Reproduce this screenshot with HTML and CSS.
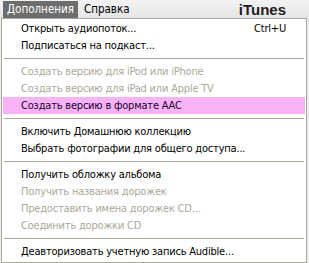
FILE: index.html
```html
<!DOCTYPE html>
<html lang="ru">
<head>
    <meta charset="UTF-8">
    <title>iTunes — Дополнения</title>
    <link rel="stylesheet" href="styles.css">
</head>
<body>
    <div class="menubar">
        <span class="menubar-item active">Дополнения</span>
        <span class="menubar-item">Справка</span>
        <span class="brand">iTunes</span>
    </div>
    <div class="menu">
        <div class="item"><span>Открыть аудиопоток...</span><span class="shortcut">Ctrl+U</span></div>
        <div class="item">Подписаться на подкаст...</div>
        <div class="sep"></div>
        <div class="item disabled">Создать версию для iPod или iPhone</div>
        <div class="item disabled">Создать версию для iPad или Apple TV</div>
        <div class="item hover">Создать версию в формате AAC</div>
        <div class="sep"></div>
        <div class="item">Включить Домашнюю коллекцию</div>
        <div class="item">Выбрать фотографии для общего доступа...</div>
        <div class="sep"></div>
        <div class="item">Получить обложку альбома</div>
        <div class="item disabled">Получить названия дорожек</div>
        <div class="item disabled">Предоставить имена дорожек CD...</div>
        <div class="item disabled">Соединить дорожки CD</div>
        <div class="sep"></div>
        <div class="item">Деавторизовать учетную запись Audible...</div>
    </div>
</body>
</html>
```

FILE: styles.css
```css
body {
    margin: 0;
    width: 309px;
    height: 263px;
    overflow: hidden;
    background: #ebebeb;
    font-family: "DejaVu Sans Condensed", "DejaVu Sans", sans-serif;
    font-size: 11px;
    color: #000;
}

.menubar {
    height: 18px;
    display: flex;
    align-items: center;
    padding: 0 0 0 3px;
    background: linear-gradient(#f2f2f2, #e6e6e6);
}

.menubar-item {
    height: 17px;
    line-height: 17px;
    padding: 0 4px 0 4px;
    font-size: 11.5px;
}

.menubar-item.active {
    background: #6d6d6d;
    color: #fff;
    margin-top: 1px;
    margin-right: 2px;
}

.brand {
    margin-left: auto;
    margin-right: 23px;
    font-family: "Liberation Sans", Arial, sans-serif;
    font-weight: bold;
    font-size: 15px;
    color: #1e1e1e;
}

.menu {
    margin: 0 2px 0 1px;
    height: 245px;
    box-sizing: border-box;
    background: #fff;
    border: 1px solid #aca899;
    padding: 1px 1px 0;
}

.item {
    height: 17px;
    line-height: 17px;
    padding: 0 19px 0 18px;
    display: flex;
    justify-content: space-between;
    white-space: nowrap;
    letter-spacing: -0.2px;
}

.item.disabled {
    color: #aca899;
}

.item.hover {
    background: #f7b3f6;
    color: #1a0033;
}

.sep {
    height: 1px;
    margin: 4px 1px 4px 1px;
    background: #aca899;
}
```
